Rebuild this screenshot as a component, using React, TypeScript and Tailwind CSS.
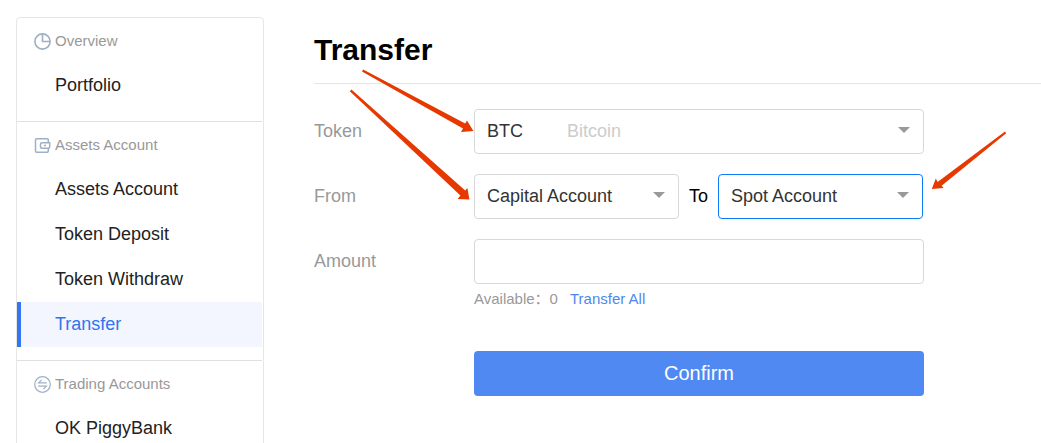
import React, { useState } from 'react';

const PieIcon = () => (
  <svg className="size-[17px] shrink-0" viewBox="0 0 17 17" fill="none" stroke="#9fb0c6" strokeWidth="1.6">
    <circle cx="8.5" cy="8.5" r="7.6" />
    <path d="M8.5 .8v7.7h7.7" />
  </svg>
);

const WalletIcon = () => (
  <svg className="size-[17px] shrink-0" viewBox="0 0 17 17" fill="none" stroke="#9fb0c6" strokeWidth="1.5">
    <path d="M14.3 5.2V3a1.2 1.2 0 0 0-1.2-1.2H2.7a1.2 1.2 0 0 0-1.2 1.2v11a1.2 1.2 0 0 0 1.2 1.2h10.4a1.2 1.2 0 0 0 1.2-1.2v-2.4" />
    <path d="M15.7 5.7H8a1.5 1.5 0 0 0-1.5 1.5v2.6A1.5 1.5 0 0 0 8 11.3h6.2a1.5 1.5 0 0 0 1.5-1.5z" />
    <path d="M10 8.5h2" />
  </svg>
);

const SwapIcon = () => (
  <svg className="size-[17px] shrink-0" viewBox="0 0 17 17" fill="none" stroke="#9fb0c6" strokeWidth="1.2">
    <circle cx="8.5" cy="8.5" r="7.8" />
    <path d="M7.6 3.8 4.6 6.9h8.2M4.2 10.1h8.2l-3 3.1" />
  </svg>
);

const menu = [
  { title: 'Overview', icon: PieIcon, items: ['Portfolio'] },
  {
    title: 'Assets Account',
    icon: WalletIcon,
    items: ['Assets Account', 'Token Deposit', 'Token Withdraw', 'Transfer'],
  },
  { title: 'Trading Accounts', icon: SwapIcon, items: ['OK PiggyBank'] },
];

const Sidebar: React.FC = () => (
  <nav className="w-[248px] shrink-0 self-start rounded border border-[#e6e6e6] pr-px">
    {menu.map((section) => (
      <section key={section.title} className="border-b border-[#e0e0e0] pb-[13px] last:border-b-0">
        <h2 className="flex h-[45px] items-center gap-1 pt-px pl-[17px] text-[15px] text-[#999]">
          <section.icon />
          {section.title}
        </h2>
        <ul>
          {section.items.map((item) => (
            <li key={item}>
              <a
                href="#"
                aria-current={item === 'Transfer' ? 'page' : undefined}
                className="flex h-[45px] items-center border-l-4 border-transparent pb-0.5 pl-[34px] text-[#222] aria-[current=page]:border-[#3377f0] aria-[current=page]:bg-[#f3f6ff] aria-[current=page]:text-[#3075ee]"
              >
                {item}
              </a>
            </li>
          ))}
        </ul>
      </section>
    ))}
  </nav>
);

type SelectProps = {
  id: string;
  options: string[];
  hint?: string;
  active?: boolean;
};

const Select: React.FC<SelectProps> = ({ id, options, hint, active }) => (
  <div className="relative min-w-0 flex-1">
    <select
      id={id}
      className={`block h-[45px] w-full appearance-none rounded border bg-white pr-8 pb-0.5 pl-3 text-[#333] outline-none ${
        active ? 'border-[#0a7cf5]' : 'border-[#d8d8d8]'
      }`}
    >
      {options.map((option) => (
        <option key={option}>{option}</option>
      ))}
    </select>
    {hint && (
      <span className="pointer-events-none absolute inset-y-0 left-[93px] flex items-center pb-0.5 text-[#ccc]">
        {hint}
      </span>
    )}
    <svg className="pointer-events-none absolute top-[18px] right-3.5 h-1.5 w-3" viewBox="0 0 12 6" fill="#999">
      <path d="M0 0h12L6 6z" />
    </svg>
  </div>
);

// red pointers drawn over the form
const Arrows = () => (
  <svg className="pointer-events-none absolute top-0 left-0 h-[443px] w-[1041px]" viewBox="0 0 1041 443" fill="#e63900" aria-hidden="true">
    <path d="M363.2 69.6 465.2 123.4 467 120.4 473.4 131 461 131.9 463 128.6 362 71.4z" />
    <path d="M351.4 89.6 465.2 190.6 467.4 188 469.4 199.4 457.6 199 460.4 195.6 349.8 91.2z" />
    <path d="M1005 131.6 937.6 182 935.8 178.6 931.8 189.1 943.6 187.9 941.6 185.8 1006.2 133.2z" />
  </svg>
);

const App: React.FC = () => {
  const [amount, setAmount] = useState('');

  return (
    <div className="relative flex h-screen gap-[50px] overflow-hidden bg-white pt-[17px] pl-4 font-['Liberation_Sans','Noto_Sans_CJK_SC',sans-serif] text-[18px] leading-6">
      <Sidebar />
      <main className="min-w-0 flex-1">
        <h1 className="flex h-[67px] items-center border-b border-[#e6e6e6] text-[30px] font-bold text-black">
          Transfer
        </h1>
        <form className="mt-[25px] flex flex-col gap-5" onSubmit={(e) => e.preventDefault()}>
          <div className="flex items-center">
            <label htmlFor="token" className="w-40 shrink-0 pb-0.5 text-[#999]">Token</label>
            <div className="flex w-full max-w-[450px]">
              <Select id="token" options={['BTC']} hint="Bitcoin" />
            </div>
          </div>
          <div className="flex items-center">
            <label htmlFor="from" className="w-40 shrink-0 pb-0.5 text-[#999]">From</label>
            <div className="flex w-full max-w-[449px] items-center">
              <Select id="from" options={['Capital Account']} />
              <label htmlFor="to" className="w-[39px] pb-0.5 text-center text-black">To</label>
              <Select id="to" options={['Spot Account']} active />
            </div>
          </div>
          <div className="flex items-start">
            <label htmlFor="amount" className="flex h-[45px] w-40 shrink-0 items-center pb-0.5 text-[#999]">Amount</label>
            <div className="w-full max-w-[450px]">
              <input
                id="amount"
                type="text"
                value={amount}
                onChange={(e) => setAmount(e.target.value)}
                className="block h-[45px] w-full rounded border border-[#d8d8d8] px-3 outline-none"
              />
              <div className="mt-1 flex h-[22px] items-center gap-3 text-[15px] text-[#999]">
                <span>Available：0</span>
                <button type="button" className="text-[#4d88f0]">Transfer All</button>
              </div>
              <button type="submit" className="mt-[41px] h-[45px] w-full rounded bg-[#4f89f1] pb-0.5 text-[20px] text-white">
                Confirm
              </button>
            </div>
          </div>
        </form>
      </main>
      <Arrows />
    </div>
  );
};

export default App;
